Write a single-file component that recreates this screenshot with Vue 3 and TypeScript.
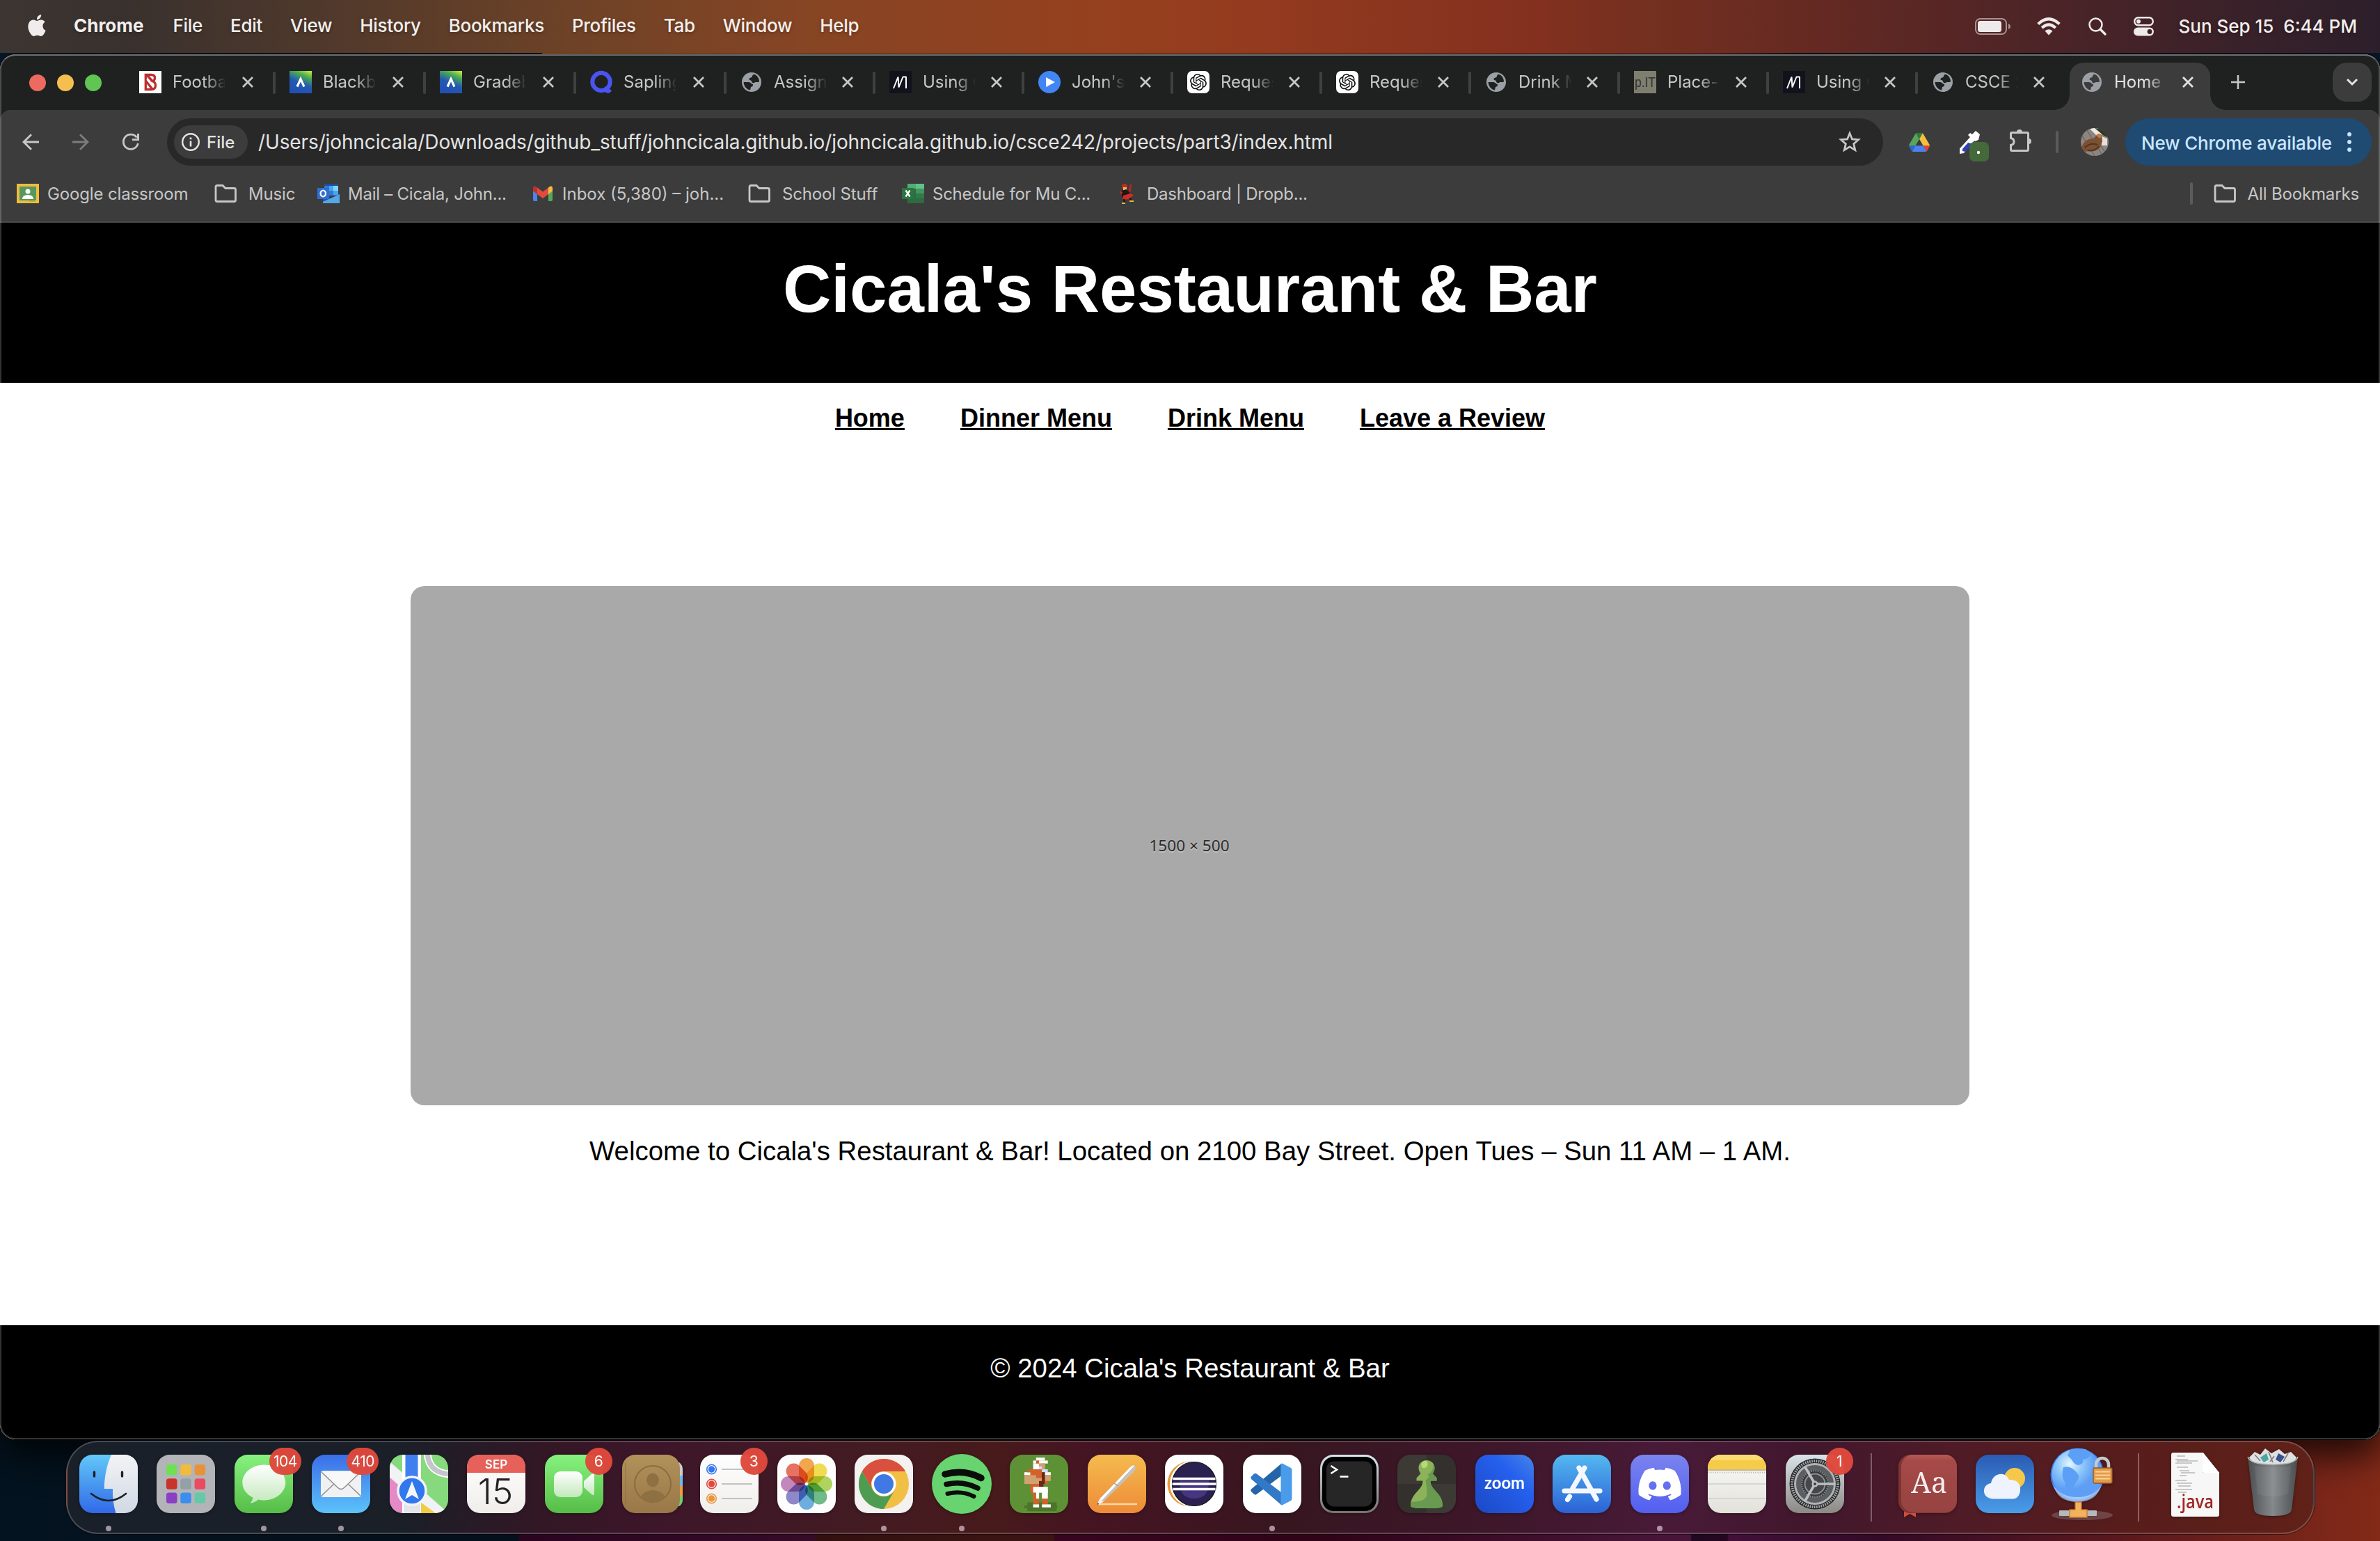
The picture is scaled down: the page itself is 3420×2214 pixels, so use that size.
<script setup lang="ts">
interface Tab { icon: string; label: string; width: number; active?: boolean; last?: boolean }
interface Bookmark { icon: string; label: string; width: number }

const menus: string[] = ['File', 'Edit', 'View', 'History', 'Bookmarks', 'Profiles', 'Tab', 'Window', 'Help']

const tabs: Tab[] = [
  { icon: 'bleacher', label: 'Footbal', width: 216 },
  { icon: 'anthology', label: 'Blackb', width: 216 },
  { icon: 'anthology', label: 'Gradeb', width: 216 },
  { icon: 'sapling', label: 'Sapling', width: 216 },
  { icon: 'globe', label: 'Assignm', width: 214 },
  { icon: 'medium', label: 'Using C', width: 214 },
  { icon: 'play', label: 'John\u0027s s', width: 214 },
  { icon: 'openai', label: 'Reques', width: 214 },
  { icon: 'openai', label: 'Reques', width: 214 },
  { icon: 'globe', label: 'Drink M', width: 214 },
  { icon: 'placeit', label: 'Place-h', width: 214 },
  { icon: 'medium', label: 'Using C', width: 214 },
  { icon: 'globe', label: 'CSCE 2', width: 214, last: true },
  { icon: 'globe', label: 'Home', width: 202, active: true }
]

const bookmarks: Bookmark[] = [
  { icon: 'classroom', label: 'Google classroom', width: 284 },
  { icon: 'folder', label: 'Music', width: 148 },
  { icon: 'outlook', label: 'Mail – Cicala, John...', width: 308 },
  { icon: 'gmail', label: 'Inbox (5,380) – joh...', width: 311 },
  { icon: 'folder', label: 'School Stuff', width: 221 },
  { icon: 'excel', label: 'Schedule for Mu C...', width: 308 },
  { icon: 'dancer', label: 'Dashboard | Dropb...', width: 290 }
]

const url = '/Users/johncicala/Downloads/github_stuff/johncicala.github.io/johncicala.github.io/csce242/projects/part3/index.html'
const navLinks: string[] = ['Home', 'Dinner Menu', 'Drink Menu', 'Leave a Review']

const launchpad: string[][] = [
  ['#6fe052', '#f2bb3b', '#e8913a'],
  ['#c8332a', '#93a0a4', '#ea4b61'],
  ['#8a3fc4', '#3b8df0', '#63c9a6']
]
const petals: string[] = ['#f29b38', '#f0d93a', '#a5cf4a', '#5cb37a', '#5aa5dd', '#7f79c4', '#bd79b4', '#e5604c']

/* x, y, width, height, colour on a 20 x 20 grid */
const player: [number, number, number, number, string][] = [
  [6, 16.3, 10, 3, '#4b7629'], [5, 17.3, 11.2, 1, '#4b7629'],
  [9, 1, 3, 1, '#fff'], [8, 2, 5, 1, '#fff'], [8, 3, 2, 3, '#fff'], [9, 2, 1, 1, '#d2622b'],
  [10, 3, 2, 2, '#d1a170'], [10, 4, 1, 2, '#cfdcfa'], [11, 3, 1, 2, '#d1a170'],
  [7, 5, 4, 4, '#d2622b'], [5, 6, 2, 1, '#fff'], [11, 5, 2, 1, '#cfdcfa'], [12, 6, 2, 1, '#fff'],
  [5, 7, 4, 3, '#d1a170'], [9, 8, 2, 2, '#d1a170'], [12, 7, 2, 2, '#d1a170'], [6, 5, 3, 1, '#d2622b'],
  [11, 6, 1, 4, '#6e2417'], [10, 9, 1.5, 2, '#6e2417'], [12, 9, 1, 1, '#d2622b'],
  [7, 10, 3, 3, '#d2622b'], [8, 11, 5, 2, '#fff'], [9, 12, 1, 3, '#fff'], [11, 12, 2, 3, '#fff'],
  [8, 13, 1, 2, '#d2622b'], [8, 15, 2, 2, '#d2622b'], [11, 15, 2, 2, '#d2622b'],
  [8, 17, 2, 1, '#fff'], [11, 17, 3, 1, '#fff']
]
</script>

<template>
  <div class="desktop">
    <header class="menubar">
      <svg class="apple" viewBox="2 0 20 24"><path fill="#efeceb" d="M12.152 6.896c-.948 0-2.415-1.078-3.96-1.04-2.04.027-3.91 1.183-4.961 3.014-2.117 3.675-.546 9.103 1.519 12.09 1.013 1.454 2.208 3.09 3.792 3.039 1.52-.065 2.09-.987 3.935-.987 1.831 0 2.35.987 3.96.948 1.637-.026 2.676-1.48 3.676-2.948 1.156-1.688 1.636-3.325 1.662-3.415-.039-.013-3.182-1.221-3.22-4.857-.026-3.04 2.48-4.494 2.597-4.559-1.429-2.09-3.623-2.324-4.39-2.376-2-.156-3.675 1.09-4.61 1.09zM15.53 3.83c.843-1.012 1.4-2.427 1.245-3.83-1.207.052-2.662.805-3.532 1.818-.78.896-1.454 2.338-1.273 3.714 1.338.104 2.715-.688 3.559-1.701"/></svg>
      <b class="appname">Chrome</b>
      <span v-for="m in menus" :key="m" class="menu">{{ m }}</span>
      <div class="status">
        <svg class="battery" viewBox="0 0 52 24"><rect x="1" y="1" width="44" height="22" rx="6.5" fill="none" stroke="#fff" stroke-opacity=".5" stroke-width="2"/><rect x="4" y="4" width="34" height="16" rx="3.5" fill="#efeaea"/><path d="M48 8c4 1.500 4 6.500 0 8z" fill="#fff" fill-opacity=".5"/></svg>
        <svg class="wifi" viewBox="0 0 34 26"><g fill="none" stroke="#efeaea" stroke-width="4.300"><path d="M1.700 9.500Q17-5 32.300 9.500"/><path d="M7.200 15Q17 6 26.800 15"/></g><path d="M11.500 19.500Q17 15 22.500 19.500L17 25.500z" fill="#efeaea"/></svg>
        <svg class="search" viewBox="0 0 26 26"><circle cx="10.500" cy="10.500" r="9" fill="none" stroke="#efeaea" stroke-width="2.500"/><path d="M17 17l7 7" stroke="#efeaea" stroke-width="3.400" stroke-linecap="round"/></svg>
        <svg class="control" viewBox="0 0 29 28"><rect x="1.200" y="1.200" width="26.600" height="11" rx="5.500" fill="none" stroke="#efeaea" stroke-width="2.400"/><circle cx="7" cy="6.700" r="3" fill="#efeaea"/><rect x="0" y="15.500" width="29" height="12" rx="6" fill="#efeaea"/><circle cx="23" cy="21.500" r="3.400" fill="#3e2028"/></svg>
        <span class="clock">Sun Sep 15&nbsp; 6:44 PM</span>
      </div>
    </header>

    <main class="window">
      <div class="tabstrip">
        <div class="lights"><i class="red"></i><i class="yellow"></i><i class="green"></i></div>
        <div v-for="(t, i) in tabs" :key="i" class="tab" :class="{ active: t.active, last: t.last, wider: t.width === 216 }" :style="{ width: t.width + 'px' }">
          <svg class="fav" viewBox="0 0 32 32">
            <template v-if="t.icon === 'bleacher'"><path fill="#fff" d="M0 0h32v32H0z"/><path d="M9.300 12.500V5.500h8.200q5 0 5 4.500 0 3.500-3 4.700 4 1.800 4 5.800 0 6-6 6H9.300V14L19 26M11 6l8.500 9" fill="none" stroke="#bd2f2f" stroke-width="3.300"/></template>
            <template v-else-if="t.icon === 'anthology'"><defs><linearGradient id="an" x1=".9" y1="0" x2=".45" y2="1"><stop offset="0" stop-color="#c6e83c"/><stop offset=".25" stop-color="#4caf50"/><stop offset=".6" stop-color="#2459b0"/><stop offset="1" stop-color="#2150b5"/></linearGradient></defs><path fill="url(#an)" d="M0 0h32v32H0z"/><path d="M11 22.500L16 11.500l5 11" fill="none" stroke="#fff" stroke-width="3.200"/></template>
            <template v-else-if="t.icon === 'sapling'"><circle cx="16" cy="15.500" r="12.700" fill="none" stroke="#4a54f0" stroke-width="6"/><path d="M17 28l5-6 9 6q-2 4-6 4z" fill="#4a54f0"/></template>
            <template v-else-if="t.icon === 'globe'"><circle cx="16" cy="16" r="14" fill="#9aa0a6"/><path :fill="t.active ? '#3c3c3c' : '#1f2120'" d="M17 7.500c0-1.500 1.500-2.500 3-2.700 4.500 1.700 7 6 7 10.500-2 1.500-4 .2-6 1-2 1.500-5 1-5-1.500 0-2-4-1-3.500-3.500.5-2 4.500-1.500 4.500-3.800zM4.600 16h6.400c4 0 4 2.500 7 3.200.5 2-1 3.300-3 3.800L14 27.400C9 26.800 4.800 22 4.600 16z"/></template>
            <template v-else-if="t.icon === 'medium'"><path fill="#12121c" d="M0 0h32v32H0z"/><path d="M6 25L12.500 8.500L13.500 23.500L19.500 8.500H24V25" fill="none" stroke="#fff" stroke-width="2" stroke-linejoin="bevel"/></template>
            <template v-else-if="t.icon === 'play'"><circle cx="16" cy="16" r="16" fill="#4285f4"/><path d="M11 9l13 7-13 7z" fill="#fff"/></template>
            <template v-else-if="t.icon === 'openai'"><rect width="32" height="32" rx="7" fill="#fff"/><path transform="translate(4 4)" fill="#111" d="M22.2819 9.8211a5.9847 5.9847 0 0 0-.5157-4.9108 6.0462 6.0462 0 0 0-6.5098-2.9A6.0651 6.0651 0 0 0 4.9807 4.1818a5.9847 5.9847 0 0 0-3.9977 2.9 6.0462 6.0462 0 0 0 .7427 7.0966 5.98 5.98 0 0 0 .511 4.9107 6.051 6.051 0 0 0 6.5146 2.9001A5.9847 5.9847 0 0 0 13.2599 24a6.0557 6.0557 0 0 0 5.7718-4.2058 5.9894 5.9894 0 0 0 3.9977-2.9001 6.0557 6.0557 0 0 0-.7475-7.0729zm-9.022 12.6081a4.4755 4.4755 0 0 1-2.8764-1.0408l.1419-.0804 4.7783-2.7582a.7948.7948 0 0 0 .3927-.6813v-6.7369l2.02 1.1686a.071.071 0 0 1 .038.052v5.5826a4.504 4.504 0 0 1-4.4945 4.4944zm-9.6607-4.1254a4.4708 4.4708 0 0 1-.5346-3.0137l.142.0852 4.783 2.7582a.7712.7712 0 0 0 .7806 0l5.8428-3.3685v2.3324a.0804.0804 0 0 1-.0332.0615L9.74 19.9502a4.4992 4.4992 0 0 1-6.1408-1.6464zM2.3408 7.8956a4.485 4.485 0 0 1 2.3655-1.9728V11.6a.7664.7664 0 0 0 .3879.6765l5.8144 3.3543-2.0201 1.1685a.0757.0757 0 0 1-.071 0l-4.8303-2.7865A4.504 4.504 0 0 1 2.3408 7.872zm16.5963 3.8558L13.1038 8.364 15.1192 7.2a.0757.0757 0 0 1 .071 0l4.8303 2.7913a4.4944 4.4944 0 0 1-.6765 8.1042v-5.6772a.79.79 0 0 0-.407-.667zm2.0107-3.0231l-.142-.0852-4.7735-2.7818a.7759.7759 0 0 0-.7854 0L9.409 9.2297V6.8974a.0662.0662 0 0 1 .0284-.0615l4.8303-2.7866a4.4992 4.4992 0 0 1 6.6802 4.66zM8.3065 12.863l-2.02-1.1638a.0804.0804 0 0 1-.038-.0567V6.0742a4.4992 4.4992 0 0 1 7.3757-3.4537l-.142.0805L8.704 5.459a.7948.7948 0 0 0-.3927.6813zm1.0976-2.3654l2.602-1.4998 2.6069 1.4998v2.9994l-2.5974 1.4997-2.6067-1.4997Z"/></template>
            <template v-else><path fill="#7f7f70" d="M0 0h32v32H0z"/><text x="16" y="23" text-anchor="middle" font-family="Liberation Sans, sans-serif" font-size="21" textLength="30" lengthAdjust="spacingAndGlyphs" fill="#34342e">p.IT</text></template>
          </svg>
          <span class="label">{{ t.label }}</span>
          <svg class="close" viewBox="0 0 16 16"><path d="M1 1l14 14M15 1L1 15" stroke-width="2.800" :stroke="t.active ? '#e3e3e3' : '#c7c7c7'"/></svg>
        </div>
        <svg class="plus" viewBox="0 0 20 20"><path d="M10 0v20M0 10h20" stroke="#c7c7c7" stroke-width="2.500"/></svg>
        <div class="tabmenu"><svg viewBox="0 0 18 12"><path d="M2 2l7 7 7-7" fill="none" stroke="#e3e3e3" stroke-width="3"/></svg></div>
      </div>

      <div class="toolbar">
        <svg class="nav" viewBox="0 0 24 24"><path d="M24 12H2M13 1.200L2 12l11 10.800" fill="none" stroke="#c7c7c7" stroke-width="2.800"/></svg>
        <svg class="nav" viewBox="0 0 24 24"><path d="M0 12h22M11 1.200L22 12 11 22.800" fill="none" stroke="#7c7c7c" stroke-width="2.800"/></svg>
        <svg class="nav" viewBox="0 0 24 24"><path d="M22.300 14A10.600 10.600 0 1 1 20.500 5.500" fill="none" stroke="#c7c7c7" stroke-width="2.800"/><path d="M24 0v10H14V7.200h7V0z" fill="#c7c7c7"/></svg>
        <div class="omnibox">
          <div class="chip">
            <svg viewBox="0 0 26 26"><circle cx="13" cy="13" r="11.800" fill="none" stroke="#e3e3e3" stroke-width="2.400"/><path d="M13 11.500v8M13 6.500v2.700" stroke="#e3e3e3" stroke-width="2.600"/></svg>
            <span>File</span>
          </div>
          <span class="url">{{ url }}</span>
          <svg class="star" viewBox="0 0 30 30"><path d="M15 3.200l3.300 8 8.500.7-6.500 5.600 2 8.400L15 21.400 7.700 25.900l2-8.400L3.200 11.900l8.500-.7z" fill="none" stroke="#c7c7c7" stroke-width="2.600"/></svg>
        </div>
        <svg class="drive" viewBox="0 0 87.300 78"><path d="m6.600 66.850 3.850 6.650c.8 1.400 1.950 2.500 3.300 3.300l13.750-23.800h-27.500c0 1.550.4 3.100 1.200 4.500z" fill="#2f66d0"/><path d="m43.650 25-13.750-23.800c-1.350.8-2.500 1.900-3.300 3.300l-25.400 44a9.060 9.060 0 0 0 -1.200 4.500h27.500z" fill="#58a65c"/><path d="m73.550 76.800c1.350-.8 2.500-1.900 3.300-3.300l1.600-2.750 7.650-13.250c.8-1.400 1.200-2.950 1.200-4.500h-27.502l5.852 11.500z" fill="#e34335"/><path d="m43.650 25 13.750-23.800c-1.350-.8-2.900-1.200-4.500-1.200h-18.500c-1.600 0-3.150.45-4.500 1.200z" fill="#2f7d3a"/><path d="m59.800 53h-32.300l-13.750 23.800c1.350.8 2.900 1.200 4.500 1.200h50.800c1.600 0 3.150-.45 4.500-1.200z" fill="#4c82ef"/><path d="m73.400 26.500-12.700-22c-.8-1.400-1.950-2.500-3.300-3.300l-13.750 23.800 16.150 28h27.450c0-1.550-.4-3.100-1.200-4.500z" fill="#f5bf42"/></svg>
        <svg class="dropper" viewBox="0 0 44 46"><path d="M2 33V25.500L17 9l-3-3 3-3 3 2 5-5 6 5-2 8-5 2-1-1L8 32z" fill="#fff"/><path d="M6 29v-3l8-9 4 1v4l-8 8z" fill="#2f3fb4"/><rect x="16" y="16" width="28" height="28" rx="7" fill="#44693a"/><circle cx="29" cy="31" r="2.200" fill="#fff"/></svg>
        <svg class="puzzle" viewBox="0 0 32 34"><path d="M4 5.500H26q1.500 0 1.500 1.500V30q0 1.500-1.500 1.500H4q-1.500 0-1.500-1.500V23.500C8.500 22.500 8.500 14.500 2.500 13.500V7q0-1.500 1.500-1.500z" fill="none" stroke="#c7c7c7" stroke-width="3"/><path d="M11 5a4 4 0 0 1 8 0zM28 14a4 4 0 0 1 0 8z" fill="#c7c7c7"/></svg>
        <i class="vsep"></i>
        <svg class="avatar" viewBox="0 0 40 40"><clipPath id="av"><circle cx="20" cy="20" r="20"/></clipPath><g clip-path="url(#av)"><path fill="#8d8581" d="M0 0h40v40H0z"/><path d="M0 8l20 32M8 2l24 38M-4 20l12 20M26 20l12 20" stroke="#6c6461" stroke-width="1.200"/><path d="M12 0h14l4 10-6 2z" fill="#ece9e4"/><path d="M20 0h20v14l-8-4z" fill="#2c3a26"/><path d="M30 12l8 3v10h-8z" fill="#e8e0d8"/><path d="M1 31C2 20 9 15 18 15l5-5q5-4 7 1l1 8-3 9q-7 7-15 5l-8 1z" fill="#7a5233"/><path d="M22 10q6-5 8 2l-3 3z" fill="#c87a42"/><path d="M6 28q8-8 18-4M10 32q10 2 16-6" stroke="#51331f" stroke-width="2" fill="none"/></g></svg>
        <div class="update"><span>New Chrome available</span><svg viewBox="0 0 6 28"><g fill="#c9e6ff"><circle cx="3" cy="3" r="2.900"/><circle cx="3" cy="14" r="2.900"/><circle cx="3" cy="25" r="2.900"/></g></svg></div>
      </div>

      <div class="bookmarks">
        <div v-for="b in bookmarks" :key="b.label" class="bookmark" :class="b.icon" :style="{ width: b.width + 'px' }">
          <svg viewBox="0 0 32 32">
            <template v-if="b.icon === 'classroom'"><path fill="#edbd3f" d="M0 2h32v28H0z"/><path fill="#57985b" d="M4 6h24v20H4z"/><circle cx="16" cy="13" r="3.500" fill="#fff"/><path d="M8 24q0-6 8-6t8 6z" fill="#fff"/><path d="M18 26h8v2h-8z" fill="#d9a52f"/></template>
            <template v-else-if="b.icon === 'folder'"><path d="M2 6.500q0-2 2-2h8l4 4h12.500q2 0 2 2V25.500q0 2-2 2H4q-2 0-2-2z" fill="none" stroke="#c7c7c7" stroke-width="2.800"/></template>
            <template v-else-if="b.icon === 'outlook'"><path fill="#1c4f9c" d="M10 2h20v4H10z"/><path fill="#2f7ad6" d="M10 5h20v14H10z"/><path fill="#7fd3fb" d="M23 5h7v7h-7z"/><path fill="#4aa5ea" d="M17 5h6v7h-6zM23 12h7v6h-7z"/><path fill="#2559a8" d="M8 16l12 8 12-8v3L14 30H8z"/><path fill="#54a8e8" d="M32 17v13H8V28z"/><rect y="8" width="17" height="16" rx="1" fill="#2f6fd0"/><ellipse cx="8.300" cy="16" rx="3.700" ry="4.300" fill="none" stroke="#fff" stroke-width="2.300"/></template>
            <template v-else-if="b.icon === 'gmail'"><path d="M2 9v16q0 2 2 2h4V14z" fill="#4c83ee"/><path d="M30 9v16q0 2-2 2h-4V14z" fill="#58a65c"/><path d="M24 7.500l2-1.500q4-2 4 3v3.500L24 17z" fill="#f3bc42"/><path d="M8 17V7.500l8 6 8-6V17l-8 6z" fill="#e34a3c"/><path d="M2 12.500V9q0-5 4-3l2 1.500V17z" fill="#b9332b"/></template>
            <template v-else-if="b.icon === 'excel'"><path fill="#2d6b40" d="M8 2h24v28H8z"/><path fill="#4fae73" d="M8 2h13v7H8z"/><path fill="#60c18a" d="M20 2h12v7H20z"/><path fill="#44945d" d="M20 9h12v7H20z"/><path fill="#33774a" d="M20 16h12v7H20z"/><rect y="8" width="17" height="16" rx="1" fill="#2b7440"/><path d="M5.500 11.500l6 9M11.500 11.500l-6 9" stroke="#fff" stroke-width="2.300"/></template>
            <template v-else><circle cx="12" cy="6" r="4" fill="#c22b22"/><path d="M10 7h5v4h-5z" fill="#e9b64c"/><path d="M20 2l2 1-1 10-4 2z" fill="#b7271f"/><path d="M6 13l8-3 5 4-1 7-9 1z" fill="#201716"/><path d="M5 12l4 2-2 4zM10 19l10-3 5 2-6 6-10 1z" fill="#cf2d22"/><path d="M11 24l1 5M20 22l1 5" stroke="#201716" stroke-width="2.500"/><path d="M8 29h5v2H8zM19 26h6v2h-6z" fill="#efb93d"/></template>
          </svg>
          <span>{{ b.label }}</span>
        </div>
        <i class="vsep allsep"></i>
        <div class="bookmark folder all">
          <svg viewBox="0 0 32 32"><path d="M2 6.500q0-2 2-2h8l4 4h12.500q2 0 2 2V25.500q0 2-2 2H4q-2 0-2-2z" fill="none" stroke="#c7c7c7" stroke-width="2.800"/></svg>
          <span>All Bookmarks</span>
        </div>
      </div>

      <div class="page">
        <div class="hero"><h1>Cicala's Restaurant &amp; Bar</h1></div>
        <nav class="links"><a v-for="l in navLinks" :key="l">{{ l }}</a></nav>
        <div class="photo"><span>1500 × 500</span></div>
        <p class="welcome">Welcome to Cicala's Restaurant &amp; Bar! Located on 2100 Bay Street. Open Tues – Sun 11 AM – 1 AM.</p>
        <footer class="foot">© 2024 Cicala's Restaurant &amp; Bar</footer>
      </div>
    </main>

    <div class="dock">
      <!-- Shared gradients -->
      <svg class="defs" width="0" height="0"><defs>
        <linearGradient id="gFinder" x2="0" y2="1"><stop offset="0" stop-color="#62c8f8"/><stop offset="1" stop-color="#3169e8"/></linearGradient>
        <linearGradient id="gFace" x2="0" y2="1"><stop offset="0" stop-color="#f3f3f5"/><stop offset="1" stop-color="#d0d9e4"/></linearGradient>
        <linearGradient id="gGreen" x2="0" y2="1"><stop offset="0" stop-color="#86f27e"/><stop offset="1" stop-color="#56bd47"/></linearGradient>
        <linearGradient id="gMail" x2="0" y2="1"><stop offset="0" stop-color="#3a6ee8"/><stop offset="1" stop-color="#5cc3fa"/></linearGradient>
        <linearGradient id="gWhite" x2="0" y2="1"><stop offset="0" stop-color="#fff"/><stop offset="1" stop-color="#f0eeeb"/></linearGradient>
        <linearGradient id="gBubble" x2="0" y2="1"><stop offset="0" stop-color="#fff"/><stop offset="1" stop-color="#c3e8bb"/></linearGradient>
        <linearGradient id="gBrown" x2="0" y2="1"><stop offset="0" stop-color="#b1925a"/><stop offset="1" stop-color="#9a7748"/></linearGradient>
        <linearGradient id="gPages" x2="0" y2="1"><stop offset="0" stop-color="#f5bb4e"/><stop offset="1" stop-color="#ee8b38"/></linearGradient>
        <linearGradient id="gSilver" x2="0" y2="1"><stop offset="0" stop-color="#d6e6ee"/><stop offset="1" stop-color="#77736f"/></linearGradient>
        <linearGradient id="gZoom" x1="1" x2="0" y2="1"><stop offset="0" stop-color="#4685e6"/><stop offset=".35" stop-color="#2560ee"/><stop offset="1" stop-color="#1c48c4"/></linearGradient>
        <linearGradient id="gStore" x2="0" y2="1"><stop offset="0" stop-color="#54b8f0"/><stop offset="1" stop-color="#2b62d6"/></linearGradient>
        <linearGradient id="gDiscord" x2="0" y2="1"><stop offset="0" stop-color="#7b83ee"/><stop offset="1" stop-color="#525ff0"/></linearGradient>
        <linearGradient id="gPaper" x2="0" y2="1"><stop offset="0" stop-color="#fbfbfa"/><stop offset="1" stop-color="#e2e1da"/></linearGradient>
        <linearGradient id="gGear" x2="0" y2="1"><stop offset="0" stop-color="#d9e3e9"/><stop offset="1" stop-color="#8c8985"/></linearGradient>
        <linearGradient id="gBook" x2="0" y2="1"><stop offset="0" stop-color="#b85a57"/><stop offset=".1" stop-color="#a64a48"/><stop offset="1" stop-color="#964341"/></linearGradient>
        <linearGradient id="gSky" x2="0" y2="1"><stop offset="0" stop-color="#2b5bb4"/><stop offset="1" stop-color="#4a9de8"/></linearGradient>
        <radialGradient id="gEarth" cx=".35" cy=".3"><stop offset="0" stop-color="#e6f6ff"/><stop offset=".5" stop-color="#8fc9fb"/><stop offset="1" stop-color="#5e9ff5"/></radialGradient>
        <linearGradient id="gTrash" x2="1" y2="0"><stop offset="0" stop-color="#4b4e50"/><stop offset=".5" stop-color="#85898b"/><stop offset="1" stop-color="#4a4d4f"/></linearGradient>
        <clipPath id="tile"><rect width="84" height="84" rx="19"/></clipPath>
      </defs></svg>

      <div class="app run"><svg viewBox="0 0 84 84"><g clip-path="url(#tile)"><path fill="url(#gFinder)" d="M0 0h84v84H0z"/><path fill="url(#gFace)" d="M46 0C39 16 36 32 35.800 49H48c-.5 12 1 24 4.500 35H84V0z"/></g><g stroke="#1d2026" stroke-linecap="round" fill="none"><path d="M21.500 25v6M61.500 25v6" stroke-width="3.400"/><path d="M17 56Q42 76 67 56" stroke-width="2.600"/></g></svg></div>

      <div class="app"><svg viewBox="0 0 84 84"><rect width="84" height="84" rx="19" fill="#b3b4b8"/><g v-for="(row, r) in launchpad" :key="r"><rect v-for="(c, k) in row" :key="k" :x="14 + k * 20.300" :y="14 + r * 20.300" width="15.500" height="15.500" rx="3.500" :fill="c"/></g></svg></div>

      <div class="app run"><svg viewBox="0 0 84 84"><rect width="84" height="84" rx="19" fill="url(#gGreen)"/><path d="M42.300 14.500c17 0 31 11.500 31 25.500s-14 25.500-31 25.500c-3 0-5.500-.3-8-1-3 2.700-7 4.500-12 5 2.500-2 4-5 4-8C17 57 11.300 49 11.300 40c0-14 14-25.500 31-25.500z" fill="url(#gBubble)"/></svg><em class="wide">104</em></div>

      <div class="app run"><svg viewBox="0 0 84 84"><rect width="84" height="84" rx="19" fill="url(#gMail)"/><rect x="13" y="23" width="58" height="38" rx="4" fill="#f1f1f3"/><g fill="none" stroke="#8d8f92" stroke-width="1.500"><path d="M14 59l19-18M70 59L51 41"/><path d="M14 25l23 22q5 5 10 0l23-22" fill="#f8f8f9"/></g></svg><em class="wide">410</em></div>

      <div class="app"><svg viewBox="0 0 84 84"><g clip-path="url(#tile)"><path fill="#86d97c" d="M0 0h84v84H0z"/><path fill="#e58ac6" d="M0 30l26 24v30H0z"/><path fill="#f2cb45" d="M44 84V70l32 14z"/><path d="M-6 16l96 84" stroke="#f1f2f4" stroke-width="17"/><path fill="#f2cb45" d="M44 84V68l22 16z"/><path fill="#fff" d="M18 0h27v84H18z"/><path fill="#3f80ee" d="M22.500 0h18v50h-18z"/><path fill="#e4e5ea" d="M20 62h24v22H20z"/><path d="M54-6q0 34 36 34" fill="none" stroke="#fff" stroke-width="11"/><path d="M54-6q0 34 36 34" fill="none" stroke="#c2c5cb" stroke-width="7"/></g><circle cx="32" cy="52" r="20" fill="#3177ee" stroke="#f0f3f8" stroke-width="3.500"/><path d="M32 38l10 26-10-6-10 6z" fill="#f4f6fa"/></svg></div>

      <div class="app"><svg viewBox="0 0 84 84"><rect width="84" height="84" rx="19" fill="url(#gWhite)"/><path d="M0 26V19Q0 0 19 0h46q19 0 19 19v7z" fill="#e5615a"/><text x="42" y="20" text-anchor="middle" font-family="Inter, sans-serif" font-weight="600" font-size="17" fill="#fff">SEP</text><text x="41" y="71" text-anchor="middle" font-family="Inter, sans-serif" font-weight="300" font-size="51" fill="#222">15</text></svg></div>

      <div class="app"><svg viewBox="0 0 84 84"><rect width="84" height="84" rx="19" fill="url(#gGreen)"/><rect x="13" y="24" width="41" height="37" rx="9" fill="url(#gBubble)"/><path d="M56 38l11-10q4-3 4 2v25q0 5-4 2L56 47z" fill="url(#gBubble)"/></svg><em>6</em></div>

      <div class="app"><svg viewBox="0 0 84 84"><path d="M76 11h6q5 4 5 10v9H76z" fill="#c9cbcd"/><path d="M76 30h11v15H76z" fill="#6fb9ee"/><path d="M76 45h11v14H76z" fill="#ee9c3a"/><path d="M76 59h11v7q-1 6-5 8h-6z" fill="#6dcf6a"/><rect width="83" height="84" rx="19" fill="url(#gBrown)"/><path d="M5 12v60" stroke="#8d6e40" stroke-width="1.500" opacity=".6"/><g fill="#8f7042"><circle cx="44" cy="42" r="26" fill="none" stroke="#8b6c3e" stroke-width="2"/><ellipse cx="44" cy="36.500" rx="9" ry="10"/><path d="M26 61q6-10 18-10t18 10q-8 7-18 7t-18-7z"/></g></svg></div>

      <div class="app"><svg viewBox="0 0 84 84"><rect width="84" height="84" rx="19" fill="url(#gWhite)"/><g stroke="#c2c2c4" stroke-width="1.800"><path d="M31 21h44M31 42h44M31 63h44"/></g><g fill="none" stroke-width="1.600"><circle cx="16.500" cy="21" r="6.800" stroke="#3478f0"/><circle cx="16.500" cy="42" r="6.800" stroke="#e2483c"/><circle cx="16.500" cy="63" r="6.800" stroke="#e8943a"/></g><circle cx="16.500" cy="21" r="4.700" fill="#3478f0"/><circle cx="16.500" cy="42" r="4.700" fill="#e2483c"/><circle cx="16.500" cy="63" r="4.700" fill="#e8943a"/></svg><em>3</em></div>

      <div class="app"><svg viewBox="0 0 84 84"><rect width="84" height="84" rx="19" fill="#fdfdfd"/><g class="petals"><rect v-for="(c, k) in petals" :key="c" x="31" y="5" width="22" height="35" rx="11" :fill="c" fill-opacity=".88" :transform="`rotate(${k * 45} 42 42)`"/></g></svg></div>

      <div class="app run"><svg viewBox="0 0 84 84"><rect width="84" height="84" rx="19" fill="#f4f1f1"/><circle cx="42" cy="42" r="36" fill="#f2bf45"/><path d="M10.800 24A36 36 0 0 1 73.200 24H42A18 18 0 0 0 26.400 51z" fill="#d9503f"/><path d="M10.800 24A36 36 0 0 0 42 78L57.600 51A18 18 0 0 1 26.400 51z" fill="#4e9c52"/><circle cx="42" cy="42" r="17.500" fill="#fff"/><circle cx="42" cy="42" r="14" fill="#4079e4"/></svg></div>

      <div class="app run"><svg viewBox="0 0 84 84"><circle cx="42" cy="42" r="43" fill="#67d470"/><g fill="none" stroke="#0b0d0b" stroke-linecap="round"><path d="M18 28Q46 20.500 70 33.500" stroke-width="9.500"/><path d="M20 42.500Q44 37 65 48" stroke-width="7.500"/><path d="M21.500 56Q42 51 59.500 60" stroke-width="6"/></g></svg></div>

      <div class="app"><svg viewBox="0 0 84 84"><rect width="84" height="84" rx="19" fill="#5e9136"/><rect v-for="(p, k) in player" :key="k" :x="p[0] * 4.200" :y="p[1] * 4.200" :width="p[2] * 4.200 + .1" :height="p[3] * 4.200 + .1" :fill="p[4]"/></svg></div>

      <div class="app"><svg viewBox="0 0 84 84"><rect width="84" height="84" rx="19" fill="url(#gPages)"/><path d="M16 71h55" stroke="#fbd9a4" stroke-width="2.600"/><path d="M14 72l4-10L61 18q5-4 7-2 2 2-1 8L24 66z" fill="#c7c1bb"/><path d="M17 64L61 18q5-4 6-2L20 66z" fill="#fff"/><path d="M38 41l6 4" stroke="#9d978f" stroke-width="1.500"/><path d="M13 72.500l4-9 6 4z" fill="#eee"/><path d="M13 72.500l1.500-3.500 2 1.500z" fill="#555"/></svg></div>

      <div class="app"><svg viewBox="0 0 84 84"><rect width="84" height="84" rx="19" fill="#fff"/><circle cx="36" cy="42" r="32.500" fill="#ea9a3e"/><circle cx="40" cy="42" r="33" fill="#fff"/><circle cx="42" cy="42" r="31.500" fill="#2a2151" stroke="#111" stroke-width="1.200"/><path d="M21 37h42q1 26-21 26T21 37z" fill="#45367f"/><path d="M11.500 34.500h61M10.500 42h63M11.500 49.500h61" stroke="#fff" stroke-width="3.600"/></svg></div>

      <div class="app run"><svg viewBox="0 0 84 84"><rect width="84" height="84" rx="19" fill="#fff"/><path d="M55 13v17.500L19.500 57q-1.800 1.200-3.500-.3L12 53q-1.500-1.800 0-3.500z" fill="#2564a9"/><path d="M12 35q-1.500-1.800 0-3.500l4-4q1.700-1.500 3.500-.3L55 54v18z" fill="#3178c6"/><path d="M54.500 13q1.500-1 3 0L69 19q1.500 1 1.500 3v41q0 2-1.500 3l-11.500 6q-1.500 1-3 0z" fill="#4a9bea"/></svg></div>

      <div class="app"><svg viewBox="0 0 84 84"><rect width="84" height="84" rx="19" fill="url(#gSilver)"/><rect x="3" y="3" width="78" height="78" rx="16.500" fill="#000"/><rect x="9" y="9.500" width="66" height="65" rx="11" fill="#262626"/><path d="M15.500 16l8.500 5.500-8.500 5.500" fill="none" stroke="#fff" stroke-width="2.600"/><path d="M28.500 31.500h12" stroke="#fff" stroke-width="2.600"/></svg></div>

      <div class="app"><svg viewBox="0 0 84 84"><g clip-path="url(#tile)"><path fill="#33302d" d="M0 0h84v84H0z"/><path fill="#3d3935" d="M0 0h42v42H0zM42 42h42v42H42z"/></g><path d="M42 8c7 0 11.500 5 11.500 11 0 3.500-1.500 6-3 8l6 6.500v4H47.500c0 14 17.500 17 17.500 36 0 3-10 3.500-23 3.500S19 76.500 19 73.500c0-19 17.500-22 17.500-36H27.500v-4l6-6.500c-1.500-2-3-4.500-3-8 0-6 4.500-11 11.500-11z" fill="#8cb35a"/><path d="M42 77c13 0 23-.5 23-3.500 0-19-17.500-22-17.500-36h9v-4l-6-6.500c2-2 3-4.500 3-8 0-2-.7-4-2-6 1 8-3 13-8 15l2 4-5 5c2 14 4 22-1 26-5 5-13 4-20 5-.5 2-.5 4-.5 5.500 0 3 10 3.500 23 3.500z" fill="#689a50"/><ellipse cx="39" cy="14" rx="4.500" ry="5.500" fill="#b4da76" transform="rotate(25 39 14)"/></svg></div>

      <div class="app"><svg viewBox="0 0 84 84"><rect width="84" height="84" rx="19" fill="url(#gZoom)"/><text x="42" y="48.500" text-anchor="middle" font-family="Lato, sans-serif" font-weight="700" font-size="25" textLength="58" lengthAdjust="spacingAndGlyphs" fill="#fff">zoom</text></svg></div>

      <div class="app"><svg viewBox="0 0 84 84"><rect width="84" height="84" rx="19" fill="url(#gStore)"/><g fill="none" stroke="#f4f8fe" stroke-width="7.200" stroke-linecap="round"><path d="M46 19L29 48M38 19l25 45M17 52h51M24.500 60l-3 4.500"/></g></svg></div>

      <div class="app run"><svg viewBox="0 0 84 84"><rect width="84" height="84" rx="19" fill="url(#gDiscord)"/><path transform="translate(11.500 11.500) scale(2.550)" fill="#fff" d="M20.317 4.3698a19.7913 19.7913 0 00-4.8851-1.5152.0741.0741 0 00-.0785.0371c-.211.3753-.4447.8648-.6083 1.2495-1.8447-.2762-3.68-.2762-5.4868 0-.1636-.3933-.4058-.8742-.6177-1.2495a.077.077 0 00-.0785-.037 19.7363 19.7363 0 00-4.8852 1.515.0699.0699 0 00-.0321.0277C.5334 9.0458-.319 13.5799.0992 18.0578a.0824.0824 0 00.0312.0561c2.0528 1.5076 4.0413 2.4228 5.9929 3.0294a.0777.0777 0 00.0842-.0276c.4616-.6304.8731-1.2952 1.226-1.9942a.076.076 0 00-.0416-.1057c-.6528-.2476-1.2743-.5495-1.8722-.8923a.077.077 0 01-.0076-.1277c.1258-.0943.2517-.1923.3718-.2914a.0743.0743 0 01.0776-.0105c3.9278 1.7933 8.18 1.7933 12.0614 0a.0739.0739 0 01.0785.0095c.1202.099.246.1981.3728.2924a.077.077 0 01-.0066.1276 12.2986 12.2986 0 01-1.873.8914.0766.0766 0 00-.0407.1067c.3604.698.7719 1.3628 1.225 1.9932a.076.076 0 00.0842.0286c1.961-.6067 3.9495-1.5219 6.0023-3.0294a.077.077 0 00.0313-.0552c.5004-5.177-.8382-9.6739-3.5485-13.6604a.061.061 0 00-.0312-.0286zM8.02 15.3312c-1.1825 0-2.1569-1.0857-2.1569-2.419 0-1.3332.9555-2.4189 2.157-2.4189 1.2108 0 2.1757 1.0952 2.1568 2.419 0 1.3332-.9555 2.4189-2.1569 2.4189zm7.9748 0c-1.1825 0-2.1569-1.0857-2.1569-2.419 0-1.3332.9554-2.4189 2.1569-2.4189 1.2108 0 2.1757 1.0952 2.1568 2.419 0 1.3332-.946 2.4189-2.1568 2.4189Z"/></svg></div>

      <div class="app"><svg viewBox="0 0 84 84"><g clip-path="url(#tile)"><path fill="url(#gPaper)" d="M0 0h84v84H0z"/><path fill="#f6cb47" d="M0 0h84v21H0z"/><path fill="#fadc70" d="M0 0h84v8H0z"/><path d="M0 22h84" stroke="#b8a678" stroke-width="1.600"/><path d="M1 25.500h84" stroke="#b5b5b2" stroke-width="2" stroke-dasharray="1.200 2"/><path d="M0 42h84M0 63h84" stroke="#cfcfca" stroke-width="1.500"/></g></svg></div>

      <div class="app"><svg viewBox="0 0 84 84"><rect width="84" height="84" rx="19" fill="url(#gGear)"/><circle cx="42" cy="42" r="36.500" fill="#26282a"/><circle cx="42" cy="42" r="33" fill="none" stroke="#a5a8aa" stroke-width="4" stroke-dasharray="1.700 1.500"/><circle cx="42" cy="42" r="28.500" fill="#5c5f61" stroke="#b0b3b5" stroke-width="3"/><circle cx="42" cy="42" r="20" fill="#37393b"/><circle cx="42" cy="42" r="19" fill="none" stroke="#85888a" stroke-width="2.500" stroke-dasharray="1.700 1.500"/><circle cx="42" cy="42" r="14.500" fill="#45484a" stroke="#8d9092" stroke-width="2"/><path d="M42 42h29M42 42L27.500 17M42 42L27.500 67" stroke="#bcbfc1" stroke-width="3.600"/><circle cx="42" cy="42" r="4.500" fill="#bcbfc1"/><circle cx="42" cy="42" r="2" fill="#3b3d3f"/></svg><em>1</em></div>

      <i class="dsep"></i>

      <div class="app"><svg viewBox="0 0 84 84"><path d="M8 76h17v14l-8.500-5L8 90z" fill="#cf4c3b"/><rect width="84" height="84" rx="17" fill="#7d3432"/><rect x="4" width="80" height="83" rx="17" fill="url(#gBook)"/><text x="44" y="55" text-anchor="middle" font-family="Noto Serif, Liberation Serif, serif" font-size="42" textLength="52" lengthAdjust="spacingAndGlyphs" fill="#f5eeee">Aa</text></svg></div>

      <div class="app"><svg viewBox="0 0 84 84"><rect width="84" height="84" rx="19" fill="url(#gSky)"/><circle cx="56" cy="34" r="15" fill="#f5c84a"/><path d="M26 63.500C8 63.500 8 43 22 41c2-14 20-19 26-5 13-1 17 8 16 16-1 7-5 11.500-11 11.500z" fill="#eef3fd"/></svg></div>

      <div class="app globeapp"><svg viewBox="0 0 84 84"><ellipse cx="42" cy="87" rx="44" ry="7" fill="#fff" opacity=".18"/><circle cx="35" cy="29" r="38.500" fill="#3f78e8"/><circle cx="35" cy="28" r="36.500" fill="url(#gEarth)"/><path d="M25-7q10-3 22-1l8 6q-4 9-12 9 2 6-6 8-6 0-10-8l-6-6zM15 18q12-3 20 9 5 5-2 13l-8 15-3 7q-5-12-4-21-7-9-3-23zM59 12l8 10 2 16-6-6q-8-8-4-20z" fill="#5c9ff6"/><path d="M0 42q10 19 35 19t35-19q-6 26-35 26T0 42z" fill="#d6ecff" opacity=".55"/><rect x="9" y="80" width="54" height="8" rx="1" fill="#b5b9bb"/><path d="M32 68h9v11h8v11H24V79h8z" fill="#f2b25e" stroke="#c97a2d" stroke-width="1.300"/><path d="M62 20V14a9 9 0 0 1 18 0v6" fill="none" stroke="#c5c9cc" stroke-width="4.500"/><rect x="58" y="19" width="27" height="22" rx="2" fill="#e39c4c" stroke="#94561d" stroke-width="1.300"/><path d="M61 24.500h21M61 29.500h21M61 34.500h21" stroke="#fbd597" stroke-width="1.800"/></svg></div>

      <i class="dsep"></i>

      <div class="app"><svg viewBox="0 0 84 84"><path d="M8 0q0-3 3-3h43L77 26v60q0 3-3 3H11q-3 0-3-3z" fill="#f7f7f7"/><path d="M53-3l24 29H53z" fill="#d8d8d8"/><path d="M53-3v26q0 3 3 3h21z" fill="#fff"/><path d="M16 2h12M14 7h18M16 9h30M14 12h24M16 18h16M20 23h14M22 26h20M20 30h10M14 37h16M16 41h22M18 45h18M14 50h24M18 54h12" stroke="#9a9a9a" stroke-width="1.100"/><text x="42.500" y="77" text-anchor="middle" font-family="Open Sans, sans-serif" font-weight="600" font-size="27" textLength="53" lengthAdjust="spacingAndGlyphs" fill="#a02622">.java</text></svg></div>

      <div class="app"><svg viewBox="0 0 84 84"><path d="M8 4l8-8 8 4 7-9 9 7 11-6 8 7 9-3 8 8-5 10H14z" fill="#dfe0e0"/><path d="M24 4l9-6 3 9-7 4z" fill="#4aa7a0"/><path d="M50-2l9 5-6 8-7-4z" fill="#38508c"/><path d="M16 0l8 9M36-4l6 15M64-2l-7 12M44 2l-6 8" stroke="#7b7d80" stroke-width="1.600"/><path d="M6 3q3 11 36 11T78 3l-9 76q-1 9-27 9t-27-9z" fill="url(#gTrash)"/><path d="M6 3q3 11 36 11T78 3" fill="none" stroke="#b5b8ba" stroke-width="1.500"/><path d="M16 16q26 5 52 0l-4 40q-22 8-44 0z" fill="#fff" opacity=".06"/></svg></div>
    </div>
  </div>
</template>

<style>
html, body { background: #03121f; overflow: hidden; }
</style>

<style scoped>
.desktop {
  width: 3420px; height: 2214px; overflow: hidden; display: flex; flex-direction: column; position: relative;
  font-family: Inter, "Liberation Sans", sans-serif;
  background:
    linear-gradient(90deg, #04192c 0 779px, #bd7a32 779px, #c0532a 1700px, #8e2f24 2450px, #04192c 2600px) 0 0 / 100% 77px no-repeat,
    linear-gradient(90deg, #04192c, #04192c) 0 77px / 100% 60px no-repeat,
    linear-gradient(90deg, #03131f 0, #04101c 745px, #2a0520 746px, #350b28 1171px, #33100f 1172px, #3a1513 1514px, #37051f 1516px, #300318 1900px, #49163a 2429px, #1f0820 2431px, #25071f 2482px, #42103a 2484px, #330a28 2700px, #55161e 3000px, #832a18 3420px);
}
svg { display: block; flex: none; overflow: visible; }
i { font-style: normal; }

.menubar {
  position: relative; z-index: 1; height: 76px; margin-bottom: 2px; flex: none; box-sizing: border-box; display: flex; align-items: center; padding: 0 33px 3px 40px;
  color: #f3efed; font-size: 26px; font-weight: 500; letter-spacing: -.3px; text-shadow: 0 2px 5px rgba(0, 0, 0, .25);
  background: linear-gradient(90deg, #3c3532 0, #39312e 180px, #51392b 480px, #6c4227 800px, #864524 1150px, #96401e 1600px, #943b1f 1800px, #83301f 2210px, #75301f 2350px, #642922 2620px, #4b2427 2950px, #2c1f2b 3420px);
}
.apple { width: 26px; height: 31px; margin-right: 40px; }
.appname { font-weight: 700; letter-spacing: 0; margin-right: 42px; }
.menu { margin-right: 40px; }
.status { margin-left: auto; display: flex; align-items: center; padding-top: 2px; }
.battery { width: 52px; height: 24px; margin-right: 37px; }
.wifi { width: 34px; height: 26px; margin-right: 40px; }
.search { width: 26px; height: 26px; margin-right: 39px; }
.control { width: 29px; height: 28px; margin-right: 35px; }
.clock { letter-spacing: 0; }

.window {
  position: relative; flex: none; width: 3420px; height: 1990px; border-radius: 22px; overflow: hidden; background: #fff;
  display: flex; flex-direction: column; box-shadow: 0 0 0 1px #000, 0 24px 50px rgba(0, 0, 0, .75);
}
.window::after {
  content: ""; position: absolute; inset: 0; border: 2px solid rgba(255, 255, 255, .2); border-top-color: rgba(255, 255, 255, .36); border-radius: 22px;
}

.tabstrip { height: 80px; background: #1f2120; display: flex; align-items: center; flex: none; }
.lights { display: flex; gap: 16px; width: 142px; padding-left: 42px; padding-top: 2px; }
.lights i { width: 24px; height: 24px; border-radius: 50%; }
.red { background: #ec6a5f; }
.yellow { background: #f5bf4f; }
.green { background: #61c554; }
.tab { height: 68px; margin-top: 12px; padding: 0 0 12px 16px; box-sizing: border-box; display: flex; align-items: center; position: relative; flex: none; }
.tab::after { content: ""; position: absolute; right: 4px; top: 13px; width: 4px; height: 32px; border-radius: 2px; background: #3f4140; }
.tab.last::after { display: none; }
.fav { width: 32px; height: 32px; }
.label {
  width: 75px; margin: 0 23px 0 16px; overflow: hidden; white-space: nowrap; font-size: 24px; line-height: 32px; color: #c7c7c7;
  -webkit-mask-image: linear-gradient(90deg, #000 46px, transparent 77px); mask-image: linear-gradient(90deg, #000 46px, transparent 77px);
}
.tab.wider .label { margin-right: 25px; }
.close { width: 16px; height: 16px; }
.tab.active { background: #3c3c3c; border-radius: 20px 20px 0 0; }
.tab.active .label { color: #e3e3e3; }
.tab.active::before, .tab.active::after {
  content: ""; position: absolute; top: auto; bottom: 0; width: 22px; height: 22px; border-radius: 0; background: none;
}
.tab.active::before { left: -22px; background: radial-gradient(circle at 0 0, transparent 21.500px, #3c3c3c 22px); }
.tab.active::after { right: -22px; background: radial-gradient(circle at 100% 0, transparent 21.500px, #3c3c3c 22px); }
.plus { width: 20px; height: 20px; margin-left: 30px; }
.tabmenu { margin: 0 12px 0 auto; width: 56px; height: 56px; border-radius: 20px; background: #3c3c3c; display: flex; align-items: center; justify-content: center; }
.tabmenu svg { width: 18px; height: 12px; }

.toolbar {
  height: 92px; box-sizing: border-box; padding: 0 12px 0 32px; display: flex; align-items: center; flex: none;
  background: radial-gradient(circle at 16px 16px, #3c3c3c 16px, #1f2120 16.500px) 0 0 / 16px 16px no-repeat, radial-gradient(circle at 0 16px, #3c3c3c 16px, #1f2120 16.500px) 100% 0 / 16px 16px no-repeat, #3c3c3c;
}
.nav { width: 24px; height: 24px; margin-right: 48px; }
.nav:nth-child(3) { margin-right: 40px; }
.omnibox { width: 2466px; height: 68px; border-radius: 34px; background: #282828; display: flex; align-items: center; flex: none; box-sizing: border-box; padding: 0 33px 0 10px; color: #e3e3e3; }
.chip { width: 106px; height: 48px; border-radius: 24px; background: #3c3c3c; display: flex; align-items: center; font-size: 24px; font-weight: 500; box-sizing: border-box; padding-left: 11px; }
.chip svg { width: 26px; height: 26px; margin-right: 10px; }
.url { font-size: 28px; margin-left: 15px; letter-spacing: -.12px; white-space: nowrap; }
.star { width: 32px; height: 32px; margin-left: auto; margin-right: -1px; }
.drive { width: 30px; height: 27px; margin-left: 37px; }
.dropper { width: 44px; height: 46px; margin-left: 41px; margin-top: 14px; }
.puzzle { width: 32px; height: 34px; margin: -4px 0 0 29px; }
.vsep { width: 4px; height: 32px; border-radius: 2px; background: #5b5b5b; margin-left: 35px; flex: none; }
.avatar { width: 40px; height: 40px; margin-left: 32px; }
.update { margin-left: auto; width: 354px; height: 68px; border-radius: 34px; background: #1f4a72; color: #c9e6ff; font-size: 26px; font-weight: 500; letter-spacing: -.2px; display: flex; align-items: center; justify-content: space-between; box-sizing: border-box; padding: 2px 29px 0 23px; }
.update span { white-space: nowrap; }
.update svg { width: 6px; height: 28px; margin-top: -2px; }

.bookmarks { height: 70px; box-sizing: border-box; border-bottom: 2px solid #4a4a4a; padding: 0 30px 12px 24px; background: #3c3c3c; display: flex; align-items: center; flex: none; }
.bookmark { display: flex; align-items: center; font-size: 24px; letter-spacing: -.15px; color: #c7c7c7; white-space: nowrap; box-sizing: border-box; }
.bookmark svg { width: 32px; height: 32px; margin-right: 12px; }
.bookmark.folder svg { margin-right: 17px; }
.bookmark.outlook, .bookmark.excel, .bookmark.dancer { letter-spacing: -.25px; }
.bookmark.gmail { letter-spacing: 0; }
.allsep { margin-left: auto; }
.all { margin-left: 30px; }

.page { flex: 1; display: flex; flex-direction: column; align-items: center; background: #fff; font-family: "Liberation Sans", Arial, sans-serif; color: #000; }
.hero { width: 100%; height: 230px; background: #000; color: #fff; text-align: center; box-sizing: border-box; padding-top: 40px; flex: none; }
h1 { margin: 0; font-size: 96px; line-height: 110px; font-weight: 700; }
.links { display: flex; gap: 80px; margin-top: 30px; height: 262px; font-size: 36px; line-height: 41px; font-weight: 700; flex: none; }
.links a { text-decoration: underline; text-decoration-thickness: 3px; white-space: nowrap; }
.photo { width: 2240px; height: 746px; border-radius: 20px; background: #a9a9a9; display: flex; align-items: center; justify-content: center; flex: none; font: 22.600px/28px "Noto Sans", "Open Sans", sans-serif; color: #2d2d2d; text-shadow: 0 2px 0 rgba(255, 255, 255, .3); }
.photo span { margin-right: 2px; }
.welcome { margin: 44px 0 0; font-size: 38.400px; line-height: 44px; white-space: nowrap; }
.foot { width: 100%; margin-top: auto; height: 164px; box-sizing: border-box; padding-top: 40px; background: #000; color: #fff; text-align: center; font-size: 38.400px; line-height: 44px; flex: none; }

.dock {
  position: relative; flex: none; width: 3231px; height: 134px; margin: 2px 0 0 95px; box-sizing: border-box; padding: 18px 17px 0; display: flex; gap: 27.450px; border: 2px solid rgba(255, 255, 255, .2); border-radius: 46px;
  background: linear-gradient(90deg, #1a202a 0, #1a1f28 480px, #331725 680px, #3d162a 850px, #431b22 1150px, #471a1b 1330px, #451423 1480px, #371620 1750px, #3e172a 2050px, #481a38 2300px, #41172d 2500px, #4e1b27 2700px, #571d1c 2950px, #602118 3231px);
  background-clip: border-box; box-shadow: 0 0 0 1px rgba(0, 0, 0, .45);
}
.defs { position: absolute; }
.app { position: relative; width: 84px; height: 84px; flex: none; }
.app > svg { width: 84px; height: 84px; filter: drop-shadow(0 1px 2px rgba(0, 0, 0, .35)); }
.run::after { content: ""; position: absolute; left: 38px; top: 102px; width: 8px; height: 8px; border-radius: 50%; background: rgba(255, 235, 245, .58); }
.app em { position: absolute; right: -13px; top: -10px; min-width: 39px; height: 39px; border-radius: 20px; background: #e0493c; opacity: .97; color: #fff; font-style: normal; font-size: 21px; line-height: 39px; text-align: center; letter-spacing: -.5px; }
.app em.wide { width: 46px; right: -12px; }
.dsep { width: 2px; height: 98px; margin: -2px 10.500px 0; background: rgba(255, 255, 255, .3); flex: none; }
.petals { mix-blend-mode: multiply; }
.petals rect { mix-blend-mode: multiply; }
</style>
